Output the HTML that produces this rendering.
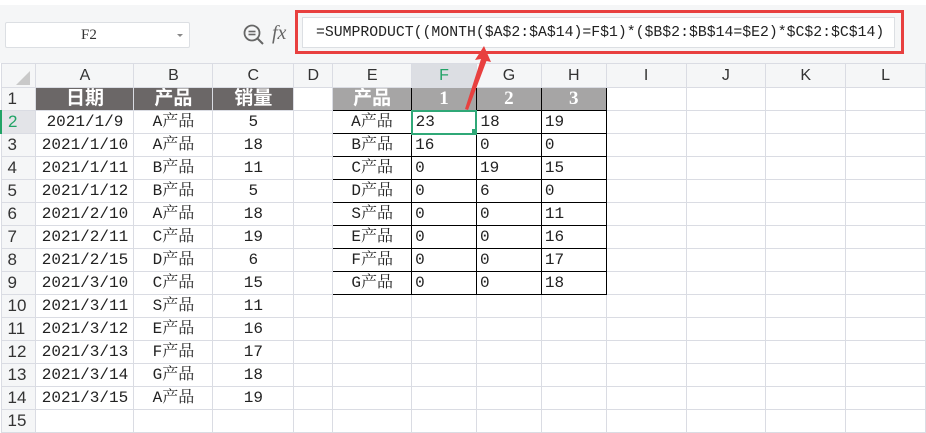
<!DOCTYPE html>
<html><head><meta charset="utf-8">
<style>
*{margin:0;padding:0;box-sizing:border-box}
body{width:926px;height:427px;overflow:hidden;background:#fff;position:relative;font-family:"Liberation Mono","Noto Serif CJK SC",monospace;}
.bar{position:absolute;left:0;top:5px;width:926px;height:58px;background:#f5f6f7;}
.top{position:absolute;left:0;top:0;width:926px;height:5px;background:#fff;}
.name{position:absolute;left:5px;top:22px;width:185px;height:26px;background:#fff;border:1px solid #dcdfe3;border-radius:2px;font:15px "Liberation Serif",serif;color:#333;line-height:24px;padding-left:75px;}
.name:after{content:"";position:absolute;right:6px;top:11px;border-left:3px solid transparent;border-right:3px solid transparent;border-top:3px solid #888;}
.fx{position:absolute;left:272px;top:22px;font:italic 20px "Liberation Serif",serif;color:#666;}
.fbox{position:absolute;left:302px;top:17px;width:593px;height:31px;background:#fff;border:1px solid #dcdfe3;font:14.8px "Liberation Mono","Noto Sans CJK SC",monospace;color:#222;line-height:30px;padding-left:13px;white-space:nowrap;overflow:hidden;}
.red{position:absolute;left:295px;top:10px;width:609px;height:44px;border:3px solid #e8403f;}
table{position:absolute;left:0;top:63px;border-collapse:collapse;table-layout:fixed;}
td{height:23px;border:1px solid #dadce3;font-size:16px;color:#222;white-space:nowrap;overflow:hidden;padding:0 3px;line-height:20px;}
tr.h td{height:24px;background:#f5f6f7;text-align:center;font-family:"Liberation Sans",sans-serif;font-size:16px;color:#333;}
td.rh{background:#f5f6f7;text-align:left;font-family:"Liberation Sans",sans-serif;font-size:17px;color:#333;padding-left:6px;}
.c{text-align:center}
.d{background:#6b6767;color:#fff;font-weight:bold;font-size:19px;text-align:center;font-family:"Liberation Serif","Noto Sans CJK SC",serif;}
.g{background:#a6a5a5;color:#fff;font-weight:bold;font-size:19px;text-align:center;font-family:"Liberation Serif","Noto Sans CJK SC",serif;}
.b{border:1px solid #000;}
</style></head><body>
<div class="top"></div>
<div class="bar"></div>
<div class="name">F2</div>
<svg style="position:absolute;left:242px;top:23px" width="24" height="24" viewBox="0 0 24 24"><circle cx="10" cy="10" r="7.5" fill="none" stroke="#666" stroke-width="1.8"/><line x1="15.5" y1="15.5" x2="21" y2="21" stroke="#666" stroke-width="2"/><line x1="6.5" y1="8.5" x2="13.5" y2="8.5" stroke="#666" stroke-width="1.6"/><line x1="6.5" y1="11.5" x2="13.5" y2="11.5" stroke="#666" stroke-width="1.6"/></svg>
<div class="fx">fx</div>
<div class="fbox">=SUMPRODUCT((MONTH($A$2:$A$14)=F$1)*($B$2:$B$14=$E2)*$C$2:$C$14)</div>
<div class="red"></div>
<table>
<colgroup><col style="width:35px"><col style="width:98px"><col style="width:79px"><col style="width:81px"><col style="width:39px"><col style="width:79px"><col style="width:65px"><col style="width:65px"><col style="width:65px"><col style="width:80px"><col style="width:80px"><col style="width:80px"><col style="width:80px"></colgroup>
<tr class="h"><td><svg width="16" height="16" style="display:block;margin:4px 0 0 10px"><polygon points="15,1 15,15 1,15" fill="#c9c9c9"/></svg></td><td>A</td><td>B</td><td>C</td><td>D</td><td>E</td><td style="background:#dcdee3;color:#21a366">F</td><td>G</td><td>H</td><td>I</td><td>J</td><td>K</td><td>L</td></tr>
<tr><td class="rh">1</td><td class="d">日期</td><td class="d">产品</td><td class="d">销量</td><td></td><td class="g b">产品</td><td class="g b">1</td><td class="g b">2</td><td class="g b">3</td><td></td><td></td><td></td><td></td></tr>
<tr><td class="rh" style="background:#e3e4e8;color:#21a366;border-left:2px solid #21a366">2</td><td class="c">2021/1/9</td><td class="c">A产品</td><td class="c">5</td><td></td><td class="c b">A产品</td><td class="b" style="border:2px solid #2fa877">23</td><td class="b">18</td><td class="b">19</td><td></td><td></td><td></td><td></td></tr>
<tr><td class="rh">3</td><td class="c">2021/1/10</td><td class="c">A产品</td><td class="c">18</td><td></td><td class="c b">B产品</td><td class="b">16</td><td class="b">0</td><td class="b">0</td><td></td><td></td><td></td><td></td></tr>
<tr><td class="rh">4</td><td class="c">2021/1/11</td><td class="c">B产品</td><td class="c">11</td><td></td><td class="c b">C产品</td><td class="b">0</td><td class="b">19</td><td class="b">15</td><td></td><td></td><td></td><td></td></tr>
<tr><td class="rh">5</td><td class="c">2021/1/12</td><td class="c">B产品</td><td class="c">5</td><td></td><td class="c b">D产品</td><td class="b">0</td><td class="b">6</td><td class="b">0</td><td></td><td></td><td></td><td></td></tr>
<tr><td class="rh">6</td><td class="c">2021/2/10</td><td class="c">A产品</td><td class="c">18</td><td></td><td class="c b">S产品</td><td class="b">0</td><td class="b">0</td><td class="b">11</td><td></td><td></td><td></td><td></td></tr>
<tr><td class="rh">7</td><td class="c">2021/2/11</td><td class="c">C产品</td><td class="c">19</td><td></td><td class="c b">E产品</td><td class="b">0</td><td class="b">0</td><td class="b">16</td><td></td><td></td><td></td><td></td></tr>
<tr><td class="rh">8</td><td class="c">2021/2/15</td><td class="c">D产品</td><td class="c">6</td><td></td><td class="c b">F产品</td><td class="b">0</td><td class="b">0</td><td class="b">17</td><td></td><td></td><td></td><td></td></tr>
<tr><td class="rh">9</td><td class="c">2021/3/10</td><td class="c">C产品</td><td class="c">15</td><td></td><td class="c b">G产品</td><td class="b">0</td><td class="b">0</td><td class="b">18</td><td></td><td></td><td></td><td></td></tr>
<tr><td class="rh">10</td><td class="c">2021/3/11</td><td class="c">S产品</td><td class="c">11</td><td></td><td></td><td></td><td></td><td></td><td></td><td></td><td></td><td></td></tr>
<tr><td class="rh">11</td><td class="c">2021/3/12</td><td class="c">E产品</td><td class="c">16</td><td></td><td></td><td></td><td></td><td></td><td></td><td></td><td></td><td></td></tr>
<tr><td class="rh">12</td><td class="c">2021/3/13</td><td class="c">F产品</td><td class="c">17</td><td></td><td></td><td></td><td></td><td></td><td></td><td></td><td></td><td></td></tr>
<tr><td class="rh">13</td><td class="c">2021/3/14</td><td class="c">G产品</td><td class="c">18</td><td></td><td></td><td></td><td></td><td></td><td></td><td></td><td></td><td></td></tr>
<tr><td class="rh">14</td><td class="c">2021/3/15</td><td class="c">A产品</td><td class="c">19</td><td></td><td></td><td></td><td></td><td></td><td></td><td></td><td></td><td></td></tr>
<tr><td class="rh">15</td><td></td><td></td><td></td><td></td><td></td><td></td><td></td><td></td><td></td><td></td><td></td><td></td></tr>
</table>
<div style="position:absolute;left:472px;top:129px;width:5px;height:5px;background:#2fa877"></div>
<svg style="position:absolute;left:0;top:0" width="926" height="427"><polygon points="484,46 491,62 486.5,61 468,110 465,109 481,59 475,60" fill="#e8403f"/></svg>
</body></html>
